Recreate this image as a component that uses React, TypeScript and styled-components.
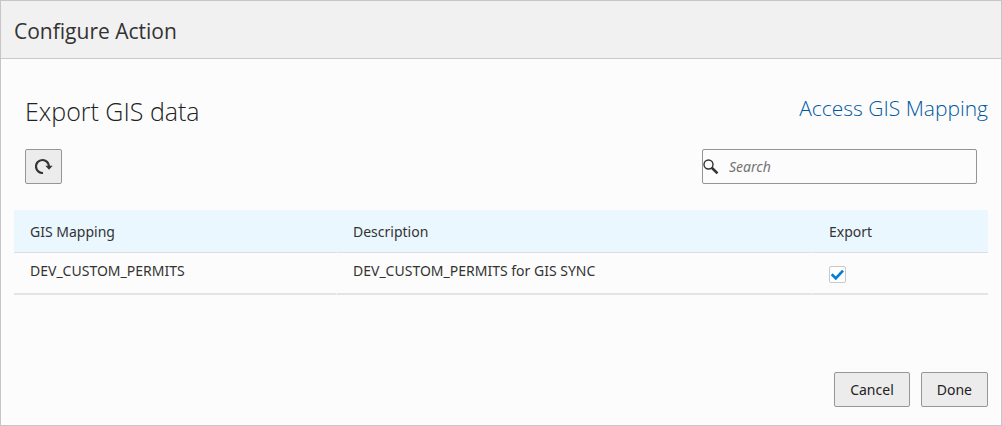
import React, { useState } from "react";
import styled, { createGlobalStyle } from "styled-components";

const headingFont = `"Segoe UI", "Open Sans", "Noto Sans", sans-serif`;

const GlobalStyle = createGlobalStyle`
  *, *::before, *::after { box-sizing: border-box; }
  body {
    margin: 0;
    background: #fcfcfc;
    color: #333;
    font: 14px/20px "Segoe UI", "Noto Sans", "Open Sans", sans-serif;
  }
`;

const Dialog = styled.section`
  display: flex;
  flex-direction: column;
  min-height: 100vh;
  border: 1px solid #c6c6c6;
  background: #fcfcfc;
`;

const DialogHeader = styled.header`
  display: flex;
  align-items: center;
  height: 58px;
  padding: 2px 13px 0;
  border-bottom: 1px solid #c9c9c9;
  background: #f1f1f1;
`;

const DialogTitle = styled.h1`
  margin: 0;
  font-family: ${headingFont};
  font-size: 21px;
  line-height: 28px;
  font-weight: 400;
`;

const DialogBody = styled.main`
  display: flex;
  flex-direction: column;
  flex: 1;
  padding: 32px 13px 0;
`;

const TitleRow = styled.div`
  display: flex;
  justify-content: space-between;
  align-items: flex-start;
  padding-left: 11px;
  font-family: ${headingFont};
`;

const SectionTitle = styled.h2`
  margin: 0;
  color: #222;
  font-size: 25px;
  line-height: 40px;
  font-weight: 300;
`;

const MappingLink = styled.a`
  color: #0059a0;
  font-size: 21px;
  line-height: 34px;
  font-weight: 300;
  text-decoration: none;
`;

const Toolbar = styled.div`
  display: flex;
  justify-content: space-between;
  margin-top: 18px;
  padding: 0 11px;
`;

const Button = styled.button`
  display: inline-flex;
  align-items: center;
  justify-content: center;
  height: 35px;
  padding: 0 15px;
  border: 1px solid #969698;
  border-radius: 2px;
  background: #ececec;
  color: #222;
  font: inherit;
`;

const IconButton = styled(Button)`
  width: 37px;
  padding: 0;
`;

const SearchBox = styled.label`
  display: flex;
  align-items: center;
  width: 275px;
  height: 35px;
  border: 1px solid #949496;
  border-radius: 2px;
  background: #fcfcfc;
`;

const SearchInput = styled.input`
  flex: 1;
  min-width: 0;
  padding: 0 10px;
  border: 0;
  outline: 0;
  background: transparent;
  color: #333;
  font: inherit;
  &::placeholder {
    color: #737373;
    font-style: italic;
    opacity: 1;
  }
`;

const Table = styled.table`
  width: 100%;
  margin-top: 26px;
  border-collapse: separate;
  border-spacing: 0;
  table-layout: fixed;
`;

const Column = styled.col<{ $width?: string }>`
  width: ${({ $width }) => $width ?? "auto"};
`;

const HeadCell = styled.th`
  height: 43px;
  padding: 1px 16px 0;
  border-bottom: 1px solid #dcdfe0;
  background: #ebf7fe;
  font-weight: 400;
  text-align: left;
  &:not(:last-child) { border-right: 1px solid #ebf7fe; }
`;

const Cell = styled.td`
  height: 42px;
  padding: 8px 16px 0;
  border-bottom: 2px solid #e4e4e4;
  vertical-align: top;
  &:not(:last-child) { border-right: 1px solid #fcfcfc; }
`;

const CheckLabel = styled.label`
  display: grid;
  width: 17px;
  height: 17px;
  margin-top: 5px;
  > * { grid-area: 1 / 1; }
`;

const Checkbox = styled.input`
  appearance: none;
  width: 17px;
  height: 17px;
  margin: 0;
  border: 1px solid #c9c9c9;
  border-radius: 2px;
  background: #fff;
  & + svg { visibility: hidden; pointer-events: none; }
  &:checked + svg { visibility: visible; }
`;

const DialogFooter = styled.footer`
  display: flex;
  justify-content: flex-end;
  gap: 11px;
  padding: 24px 13px 18px;
`;

const RefreshIcon = () => (
  <svg width="18" height="18" viewBox="0 0 18 18" aria-hidden="true">
    <path d="M8 15A6.5 6.5 0 1 1 14 8.5" fill="none" stroke="#333" strokeWidth="2.2" />
    <path d="M10.4 7.8H17.6L14 11.8Z" fill="#333" />
  </svg>
);

const SearchIcon = () => (
  <svg width="16" height="16" viewBox="0 0 16 16" aria-hidden="true">
    <circle cx="5.5" cy="5.5" r="4.5" fill="none" stroke="#333" strokeWidth="1.4" />
    <path d="M8.8 8.8L14.5 14.4" stroke="#333" strokeWidth="2.6" />
  </svg>
);

const CheckIcon = () => (
  <svg width="17" height="17" viewBox="0 0 17 17" aria-hidden="true">
    <path d="M2.7 8.3L6.8 12.4L14 4.6" fill="none" stroke="#057fcd" strokeWidth="2.7" />
  </svg>
);

const mappings = [
  { name: "DEV_CUSTOM_PERMITS", description: "DEV_CUSTOM_PERMITS for GIS SYNC" },
];

export default function App() {
  const [query, setQuery] = useState("");
  return (
    <>
      <GlobalStyle />
      <Dialog>
        <DialogHeader>
          <DialogTitle>Configure Action</DialogTitle>
        </DialogHeader>
        <DialogBody>
          <TitleRow>
            <SectionTitle>Export GIS data</SectionTitle>
            <MappingLink href="#mapping">Access GIS Mapping</MappingLink>
          </TitleRow>
          <Toolbar>
            <IconButton type="button" aria-label="Refresh">
              <RefreshIcon />
            </IconButton>
            <SearchBox>
              <SearchIcon />
              <SearchInput
                type="text"
                aria-label="Search"
                placeholder="Search"
                value={query}
                onChange={(e) => setQuery(e.target.value)}
              />
            </SearchBox>
          </Toolbar>
          <Table>
            <colgroup>
              <Column $width="323px" />
              <Column />
              <Column $width="175px" />
            </colgroup>
            <thead>
              <tr>
                <HeadCell scope="col">GIS Mapping</HeadCell>
                <HeadCell scope="col">Description</HeadCell>
                <HeadCell scope="col">Export</HeadCell>
              </tr>
            </thead>
            <tbody>
              {mappings.map((m) => (
                <tr key={m.name}>
                  <Cell>{m.name}</Cell>
                  <Cell>{m.description}</Cell>
                  <Cell>
                    <CheckLabel>
                      <Checkbox type="checkbox" defaultChecked aria-label={`Export ${m.name}`} />
                      <CheckIcon />
                    </CheckLabel>
                  </Cell>
                </tr>
              ))}
            </tbody>
          </Table>
        </DialogBody>
        <DialogFooter>
          <Button type="button">Cancel</Button>
          <Button type="button">Done</Button>
        </DialogFooter>
      </Dialog>
    </>
  );
}
